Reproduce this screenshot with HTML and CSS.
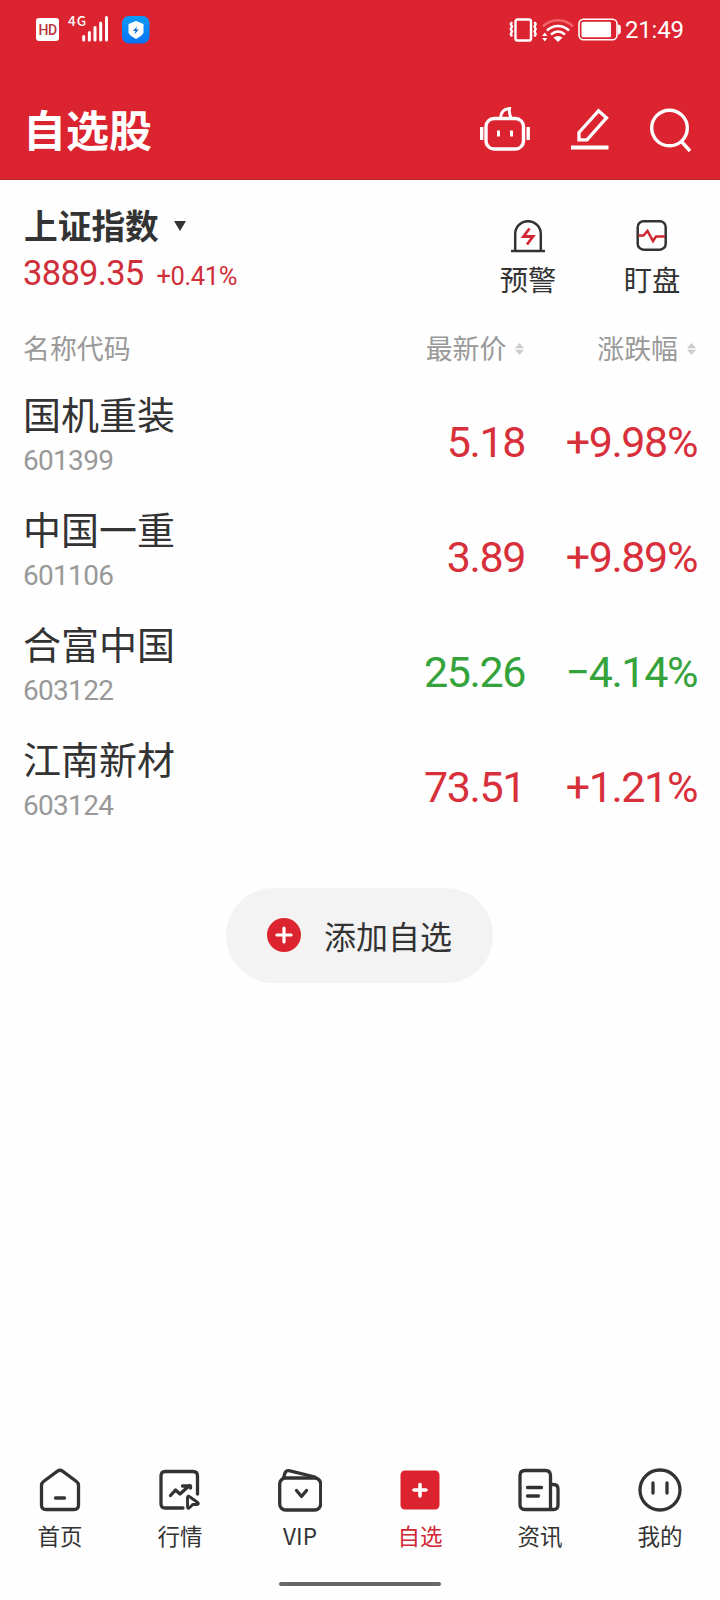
FILE: index.html
```html
<!DOCTYPE html>
<html lang="zh-CN">
<head>
<meta charset="utf-8">
<title>自选股</title>
<link rel="stylesheet" href="styles.css">
</head>
<body>
<div class="app">
  <header class="top">
    <div class="status">
      <span class="hd">HD</span>
      <span class="net">4G</span>
      <svg class="signal" width="27" height="27" viewBox="0 0 27 27" stroke="#fff" stroke-width="3" stroke-linecap="round"><path d="M1.700 21.500v3.500M7.400 17.500v7.500M13 12.500v12.500M18.700 8v17M24.500 2.500v22.500"/></svg>
      <svg class="shield" width="28" height="28" viewBox="0 0 28 28"><defs><linearGradient id="blue" x1="0" y1="0" x2="0" y2="1"><stop offset="0" stop-color="#0c9afa"/><stop offset="1" stop-color="#0873f5"/></linearGradient></defs><rect width="27.500" height="27.500" rx="7" fill="url(#blue)"/><path d="M14 5l7.500 3v8.500c0 2-5.500 5.500-7.500 6.500-2-1-7.500-4.500-7.500-6.500V8z" fill="#fff"/><path d="M15 10.500l-4 4.500h2.500l-1 3.500 4.200-5h-2.500z" fill="#1265c8"/></svg>
      <svg class="vibrate" width="29" height="24" viewBox="0 0 29 24" fill="none" stroke="#fff"><rect x="6.500" y="1.500" width="15.500" height="21" rx="2" stroke-width="2.400"/><path d="M3 4l-1.200 2 1.200 2.500-1.200 2.500 1.200 2.500-1.200 2.500 1.200 2.500M25.500 4l1.200 2-1.200 2.500 1.200 2.500-1.200 2.500 1.200 2.500-1.200 2.500" stroke-width="2.400"/></svg>
      <svg class="wifi" width="32" height="24" viewBox="0 0 32 24" fill="none" stroke="#fff" stroke-width="2.500"><path d="M1 8.500C9 .2 23 .2 31 8.500" stroke="#f4656d"/><path d="M5 12.500c6.500-6 15.500-6 22 0M9 16.500c4.500-3.800 9.500-3.800 14 0"/><path d="M11.500 19.500c3-2 6-2 9 0L16 24zM.200 18l2.600-3.500L5.400 18zM.200 20l2.600 3.500L5.400 20z" fill="#fff" stroke="none"/></svg>
      <svg class="battery" width="43" height="24" viewBox="0 0 43 24"><rect x="1" y="1.200" width="38" height="20.500" rx="4.500" fill="none" stroke="#fff" stroke-width="1.600"/><rect x="3.500" y="3.700" width="29.500" height="15.500" rx="1.500" fill="#fff"/><path d="M40 6.500q2.800 0 2.800 3v4q0 3-2.800 3z" fill="#fff"/></svg>
      <time class="clock">21:49</time>
    </div>
    <div class="titlebar">
      <h1>自选股</h1>
      <svg class="robot" width="50" height="44" viewBox="0 0 50 44" fill="none" stroke="#fff" stroke-width="3.400"><rect x="6" y="11.500" width="37.500" height="30.500" rx="8"/><path d="M20.500 11c.2-5.500 3.500-9 9-9.500-.8 3.500.5 7 1.500 9.500" stroke-width="3"/><path d="M18.500 23.500v6M31.500 23.500v6" stroke-width="3"/><path d="M1.700 20v13M48.200 20v13" stroke-width="3.400"/></svg>
      <svg class="pencil" width="38" height="43" viewBox="0 0 38 43" fill="none" stroke="#fff" stroke-width="3.300"><path d="M8 24.500L27.500 2.800l8 7L16 31.800H8z"/><path d="M0 39.500h37.500" stroke-width="3.800"/></svg>
      <svg class="search" width="42" height="45" viewBox="0 0 42 45" fill="none" stroke="#fff" stroke-width="3.400"><circle cx="19.500" cy="20" r="17.800"/><path d="M31 33l9 10"/></svg>
    </div>
  </header>

  <section class="index">
    <div class="index-info">
      <div class="index-name">上证指数<i class="caret"></i></div>
      <div class="index-quote"><span class="points">3889.35</span><span class="change">+0.41%</span></div>
    </div>
    <div class="tool">
      <svg width="34" height="33" viewBox="0 0 34 33" fill="none" stroke="#333" stroke-width="2.500"><path d="M4.200 31V14a12.800 12.800 0 0 1 25.600 0v17M0 31h34"/><path d="M18.500 8.500L12.500 16.500h9.500L16 24.500" stroke="#d02733" stroke-width="2.800"/></svg>
      <span>预警</span>
    </div>
    <div class="tool">
      <svg width="34" height="33" viewBox="0 0 34 33" fill="none" stroke="#333" stroke-width="2.500"><rect x="2.700" y="1.200" width="28" height="28.500" rx="6"/><path d="M3.500 15.500h5l4-4.500 5.500 10 3-4.500h9" stroke="#d02733"/></svg>
      <span>盯盘</span>
    </div>
  </section>

  <div class="columns">
    <span>名称代码</span>
    <span class="c-price">最新价<svg width="9" height="12" viewBox="0 0 9 12" fill="#ccc"><path d="M0 5.300L4.500 0 9 5.300zM0 6.700h9L4.500 12z"/></svg></span>
    <span class="c-pct">涨跌幅<svg width="9" height="12" viewBox="0 0 9 12" fill="#ccc"><path d="M0 5.300L4.500 0 9 5.300zM0 6.700h9L4.500 12z"/></svg></span>
  </div>

  <ul class="stocks">
    <li class="stock"><div class="who"><b>国机重装</b><span>601399</span></div><span class="price">5.18</span><span class="pct">+9.98%</span></li>
    <li class="stock"><div class="who"><b>中国一重</b><span>601106</span></div><span class="price">3.89</span><span class="pct">+9.89%</span></li>
    <li class="stock down"><div class="who"><b>合富中国</b><span>603122</span></div><span class="price">25.26</span><span class="pct">−4.14%</span></li>
    <li class="stock"><div class="who"><b>江南新材</b><span>603124</span></div><span class="price">73.51</span><span class="pct">+1.21%</span></li>
  </ul>

  <button class="add"><svg width="34" height="34" viewBox="0 0 34 34"><circle cx="17" cy="17" r="17" fill="#dc2430"/><path d="M17 10v14M10 17h14" stroke="#fff" stroke-width="3.200" stroke-linecap="round"/></svg><span>添加自选</span></button>

  <nav class="tabs">
    <a class="tab"><svg viewBox="0 0 44 44"><path d="M5.500 13.500L19.500 3.200q2.500-1.800 5 0L38.500 13.500q2 1.500 2 4V37q0 4.500-4.500 4.500H8q-4.500 0-4.500-4.500V17.500q0-2.500 2-4z"/><path d="M17.500 30h9"/></svg>首页</a>
    <a class="tab"><svg viewBox="0 0 44 44"><path d="M25 40H7Q3 40 3 36V8q0-4.500 4-4.500H35q4.500 0 4.500 4.500v18"/><path d="M12.500 27.500l5-5.500 4.500 4 9.500-8.500M24.500 18h8v2"/><path d="M29.500 29.500v9q0 3 2.200 1l3-3h4q2.800-.3 1-2L32 29q-2.500-2-2.500.5z" stroke-width="2.900"/></svg>行情</a>
    <a class="tab"><svg viewBox="0 0 44 44"><rect x="1.700" y="10" width="41" height="32" rx="6"/><path d="M5.500 10l1.500-5q1-3 5-2.200L37 9"/><path d="M18.500 22.500l5 6 5-6"/></svg>VIP</a>
    <a class="tab on"><svg viewBox="0 0 44 44"><rect x="2.500" y="2.500" width="39" height="39" rx="4.500" fill="#dc2430" stroke="none"/><path d="M22 16.500v11.500M16 22h12" stroke="#fff" stroke-width="3.600"/></svg>自选</a>
    <a class="tab"><svg viewBox="0 0 44 44"><path d="M34 41.500H7q-5 0-5-5V7.500q0-5 5-5h20.500q5 0 5 5v34M33 16.500H35.500q4.500 0 4.500 4.500v16q0 4.500-4.500 4.500h-3"/><path d="M9.500 19.500H23.500M9.500 28H20.500"/></svg>资讯</a>
    <a class="tab"><svg viewBox="0 0 44 44"><circle cx="22" cy="22" r="20"/><path d="M15 15v10M29 15v10"/></svg>我的</a>
  </nav>
  <div class="home-bar"></div>
</div>
</body>
</html>
```
FILE: styles.css
```css
* { box-sizing: border-box; }
body {
  margin: 0;
  background: #fefefe;
  color: #333;
  font-family: "Noto Sans CJK SC", sans-serif;
}
svg { display: block; flex: none; }
.app { width: 720px; height: 1600px; display: flex; flex-direction: column; overflow: hidden; }

.top { height: 180px; background: #dc2430; color: #fff; border-bottom: 1px solid #b92630; }
.status { height: 60px; display: flex; align-items: flex-start; padding: 15px 0 0 36px; }
.hd {
  width: 23px; height: 23px; margin-top: 3px; border-radius: 3px;
  background: #fff; color: #b8353c;
  font: 500 14px/24px Roboto, sans-serif; text-align: center; letter-spacing: -0.5px;
}
.net { width: 18px; margin-left: 9px; font: 500 13.5px/10px "Noto Sans CJK SC", sans-serif; letter-spacing: 1px; }
.signal { margin-left: -4px; }
.shield { margin: 1px 0 0 13px; }
.vibrate { margin: 3px 0 0 359px; }
.wifi { margin: 3px 0 0 4px; }
.battery { margin: 3px 0 0 4px; }
.clock { margin: 3px 0 0 4px; font: 400 24px/24px Roboto, sans-serif; letter-spacing: -0.2px; }

.titlebar { height: 119px; display: flex; align-items: flex-start; padding-left: 23px; }
h1 { width: 457px; margin: 46px 0 0; font-size: 43px; line-height: 44px; font-weight: 700; }
.robot { margin-top: 47px; }
.pencil { margin: 48px 0 0 41px; }
.search { margin: 48px 0 0 41px; }

.index { height: 140px; display: flex; padding: 25px 6px 0 24px; }
.index-info { flex: 1; }
.index-name { display: flex; align-items: center; height: 38px; font-size: 33.700px; font-weight: 700; }
.caret { margin: 3px 0 0 15px; border: 6px solid transparent; border-top: 10px solid #333; border-bottom: 0; }
.index-quote { display: flex; align-items: baseline; color: #d02f3a; font-family: Roboto, sans-serif; line-height: 40px; margin: 10px 0 0 -1px; }
.points { font-size: 34.500px; letter-spacing: -0.7px; }
.change { margin-left: 13px; font-size: 25.500px; letter-spacing: -0.4px; }
.tool { width: 124px; display: flex; flex-direction: column; align-items: center; padding-top: 15px; font-size: 28.300px; line-height: 32px; }
.tool span { margin-top: 10px; }

.columns { height: 65px; display: flex; align-items: flex-start; padding: 12px 24px 0 23px; color: #999; font-size: 26.900px; line-height: 32px; }
.columns > span:first-child { flex: 1; }
.c-price, .c-pct { display: flex; align-items: center; gap: 9px; }
.c-pct { margin-left: 73px; }
.columns svg { margin-top: 2px; }

.stocks { margin: 0; padding: 0; list-style: none; }
.stock { height: 115px; display: flex; padding: 0 23px 0 23px; color: #d8303b; }
.who { flex: 1; display: flex; flex-direction: column; }
.who b { margin-top: 8px; color: #333; font-size: 38px; line-height: 40px; font-weight: 400; }
.who span { margin-top: 13px; color: #999; font: 400 28px/30px Roboto, sans-serif; letter-spacing: -0.7px; }
.price, .pct { margin-top: 37px; text-align: right; font: 400 43px/40px Roboto, sans-serif; letter-spacing: -1.4px; }
.pct { width: 172px; }
.down { color: #35a33c; }

.add {
  width: 267px; height: 95px; margin: 43px 0 0 226px; padding: 0 0 2px 41px;
  display: flex; align-items: center; gap: 23px;
  border: 0; border-radius: 48px; background: #f3f3f3; color: #333;
  font: 400 32px/36px "Noto Sans CJK SC", sans-serif;
}

.tabs { display: flex; margin-top: 485px; }
.tab { width: 120px; display: flex; flex-direction: column; align-items: center; gap: 8px; font-size: 22.500px; line-height: 30px; }
.tab svg { width: 44px; height: 44px; fill: none; stroke: #333; stroke-width: 3.300; stroke-linecap: round; stroke-linejoin: round; }
.on { color: #d02733; }
.home-bar { width: 162px; height: 4px; margin: 32px 0 0 279px; border-radius: 2px; background: #666; }
```
